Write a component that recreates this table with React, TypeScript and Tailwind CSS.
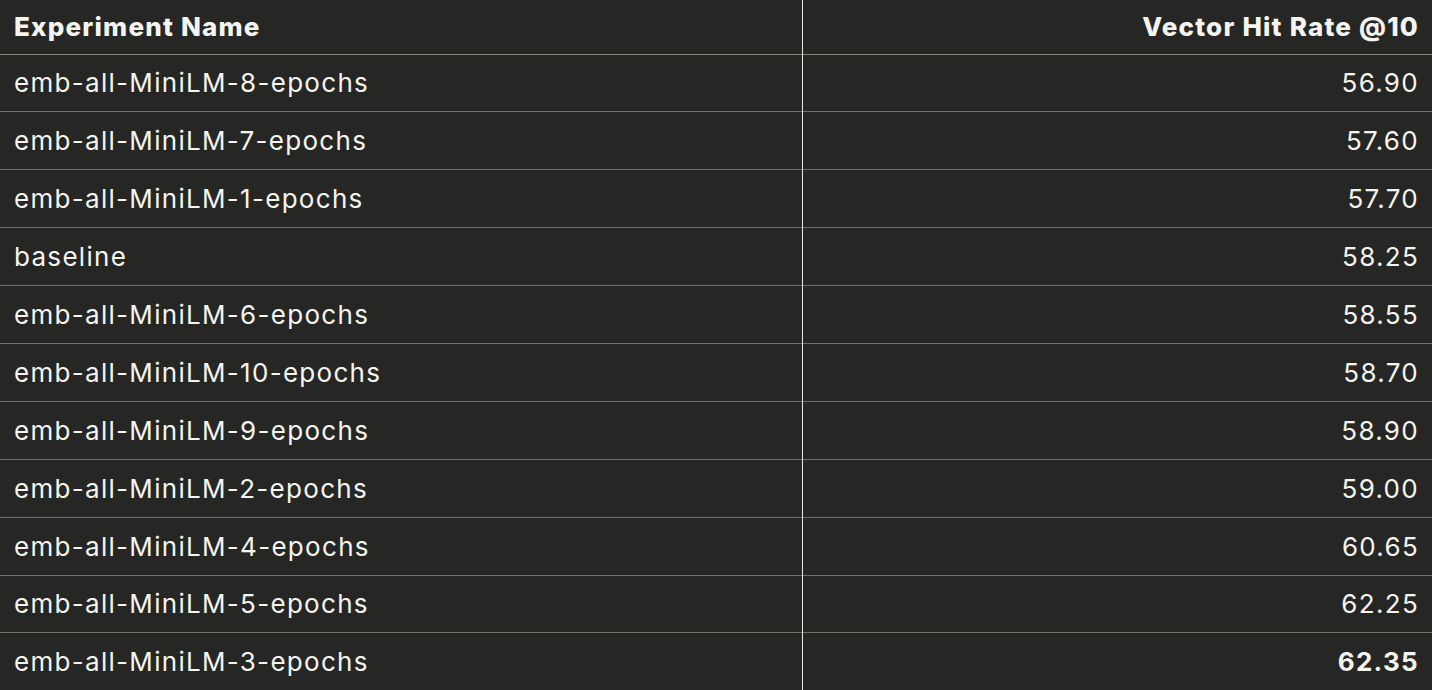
const rows: [string, string][] = [
  ["emb-all-MiniLM-8-epochs", "56.90"],
  ["emb-all-MiniLM-7-epochs", "57.60"],
  ["emb-all-MiniLM-1-epochs", "57.70"],
  ["baseline", "58.25"],
  ["emb-all-MiniLM-6-epochs", "58.55"],
  ["emb-all-MiniLM-10-epochs", "58.70"],
  ["emb-all-MiniLM-9-epochs", "58.90"],
  ["emb-all-MiniLM-2-epochs", "59.00"],
  ["emb-all-MiniLM-4-epochs", "60.65"],
  ["emb-all-MiniLM-5-epochs", "62.25"],
  ["emb-all-MiniLM-3-epochs", "62.35"],
];

export default function App() {
  return (
    <div className="h-[690px] w-[1432px] overflow-hidden bg-[#262624] text-[#f4f4f0] font-['Inter',sans-serif]">
      <table className="w-full border-collapse">
        <thead>
          <tr className="h-[54px] border-b border-[#8a8a82]">
            <th className="w-[802px] border-r border-[#e8e8e4] px-[14px] text-left text-[26px] font-extrabold tracking-[1.2px]">
              Experiment Name
            </th>
            <th className="pl-[14px] pr-[13px] text-right text-[26px] font-extrabold tracking-[1.2px]">
              Vector Hit Rate @10
            </th>
          </tr>
        </thead>
        <tbody>
          {rows.map(([name, value], i) => {
            const last = i === rows.length - 1;
            return (
              <tr key={name} className="h-[57.9px] border-b border-[#6f6f68]">
                <td className="border-r border-[#e8e8e4] px-[14px] text-[26px] tracking-[1.3px]">{name}</td>
                <td className={"pl-[14px] pr-[13px] text-right text-[26px] tracking-[1.3px] " + (last ? "font-bold" : "")}>
                  {value}
                </td>
              </tr>
            );
          })}
        </tbody>
      </table>
    </div>
  );
}
